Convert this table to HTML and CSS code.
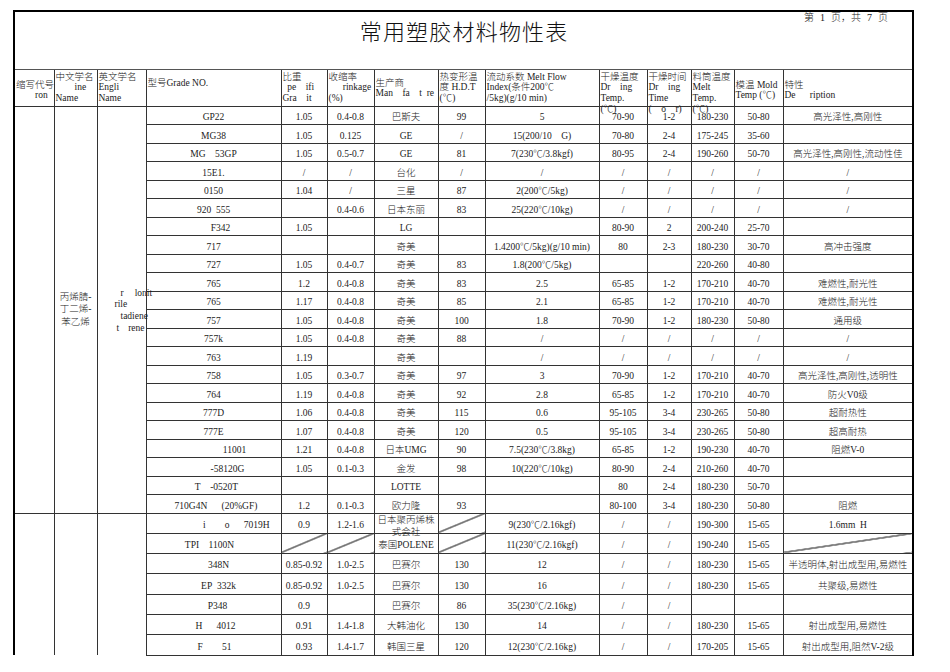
FILE: index.html
```html
<!DOCTYPE html>
<html lang="zh-CN">
<head>
<meta charset="utf-8">
<title>常用塑胶材料物性表</title>
<link rel="stylesheet" href="styles.css">
</head>
<body>
<div class="page">
<table class="sheet">
<colgroup>
<col class="w40"><col class="w43"><col class="w49"><col class="w135"><col class="w46"><col class="w47"><col class="w64"><col class="w47"><col class="w114"><col class="w48"><col class="w44"><col class="w43"><col class="w49"><col class="w130">
</colgroup>
<tr class="r-title">
<td colspan="14" class="title"><span class="pageno">第 1 页，共 7 页</span><h1>常用塑胶材料物性表</h1></td>
</tr>
<tr class="r-head">
<td class="h"><div class="hb mid">缩写代号<br>&ensp;&ensp;&ensp;&ensp;ron</div></td>
<td class="h"><div class="hb">中文学名<br>&ensp;&ensp;&ensp;&ensp;ine<br>Name</div></td>
<td class="h"><div class="hb">英文学名<br>Engli<br>Name</div></td>
<td class="h"><div class="hb one">型号Grade NO.</div></td>
<td class="h"><div class="hb">比重<br>&ensp;pe&ensp;&ensp;ifi<br>Gra&ensp;&ensp;it</div></td>
<td class="h"><div class="hb">收缩率<br>&ensp;&ensp;&ensp;rinkage<br>(%)</div></td>
<td class="h"><div class="hb two">生产商<br>Man&ensp;&ensp;fa&ensp;&ensp;t&ensp;re</div></td>
<td class="h"><div class="hb">热变形温<br>度 H.D.T<br>(℃)</div></td>
<td class="h"><div class="hb">流动系数 Melt Flow<br>Index(条件200℃<br>/5kg)(g/10 min)</div></td>
<td class="h"><div class="hb">干燥温度<br>Dr&ensp;&ensp;ing<br>Temp.<br>(℃)</div></td>
<td class="h"><div class="hb">干燥时间<br>Dr&ensp;&ensp;ing<br>Time<br>(&ensp;&ensp;o&ensp;&ensp;r)</div></td>
<td class="h"><div class="hb">料筒温度<br>Melt<br>Temp.<br>(℃)</div></td>
<td class="h"><div class="hb mid">模温 Mold<br>Temp (℃)</div></td>
<td class="h"><div class="hb mid">特性<br>De&ensp;&ensp;&ensp;ription</div></td>
</tr>

<tr class="ra">
<td rowspan="22" class="span"></td>
<td rowspan="22" class="span"><div class="zh-name">丙烯腈-<br>丁二烯-<br>苯乙烯</div></td>
<td rowspan="22" class="span"><div class="en-name"><div class="i23">r<span class="gap10"></span>lonit</div><div class="i17">rile</div><div class="i23">tadiene</div><div class="i19">t<span class="gap9"></span>rene</div></div></td>
<td>GP22</td><td>1.05</td><td>0.4-0.8</td><td>巴斯夫</td><td>99</td><td>5</td><td>70-90</td><td>1-2</td><td>180-230</td><td>50-80</td><td>高光泽性,高刚性</td>
</tr>
<tr class="ra"><td>MG38</td><td>1.05</td><td>0.125</td><td>GE</td><td>/</td><td>15(200/10&ensp;&ensp;G)</td><td>70-80</td><td>2-4</td><td>175-245</td><td>35-60</td><td></td></tr>
<tr class="ra"><td>MG&ensp;&ensp;53GP</td><td>1.05</td><td>0.5-0.7</td><td>GE</td><td>81</td><td>7(230℃/3.8kgf)</td><td>80-95</td><td>2-4</td><td>190-260</td><td>50-70</td><td>高光泽性,高刚性,流动性佳</td></tr>
<tr class="ra"><td>15E1.</td><td>/</td><td>/</td><td>台化</td><td>/</td><td>/</td><td>/</td><td>/</td><td>/</td><td>/</td><td>/</td></tr>
<tr class="ra"><td>0150</td><td>1.04</td><td>/</td><td>三星</td><td>87</td><td>2(200℃/5kg)</td><td>/</td><td>/</td><td>/</td><td>/</td><td>/</td></tr>
<tr class="ra"><td>920&ensp;555</td><td></td><td>0.4-0.6</td><td>日本东丽</td><td>83</td><td>25(220℃/10kg)</td><td>/</td><td>/</td><td>/</td><td>/</td><td>/</td></tr>
<tr class="ra"><td class="pl15">F342</td><td>1.05</td><td></td><td>LG</td><td></td><td></td><td>80-90</td><td>2</td><td>200-240</td><td>25-70</td><td></td></tr>
<tr class="ra"><td>717</td><td></td><td></td><td>奇美</td><td></td><td>1.4200℃/5kg)(g/10 min)</td><td>80</td><td>2-3</td><td>180-230</td><td>30-70</td><td>高冲击强度</td></tr>
<tr class="ra"><td>727</td><td>1.05</td><td>0.4-0.7</td><td>奇美</td><td>83</td><td>1.8(200℃/5kg)</td><td></td><td></td><td>220-260</td><td>40-80</td><td></td></tr>
<tr class="ra"><td>765</td><td>1.2</td><td>0.4-0.8</td><td>奇美</td><td>83</td><td>2.5</td><td>65-85</td><td>1-2</td><td>170-210</td><td>40-70</td><td>难燃性,耐光性</td></tr>
<tr class="ra"><td>765</td><td>1.17</td><td>0.4-0.8</td><td>奇美</td><td>85</td><td>2.1</td><td>65-85</td><td>1-2</td><td>170-210</td><td>40-70</td><td>难燃性,耐光性</td></tr>
<tr class="ra"><td>757</td><td>1.05</td><td>0.4-0.8</td><td>奇美</td><td>100</td><td>1.8</td><td>70-90</td><td>1-2</td><td>180-230</td><td>50-80</td><td>通用级</td></tr>
<tr class="ra"><td>757k</td><td>1.05</td><td>0.4-0.8</td><td>奇美</td><td>88</td><td>/</td><td>/</td><td>/</td><td>/</td><td>/</td><td>/</td></tr>
<tr class="ra"><td>763</td><td>1.19</td><td></td><td>奇美</td><td></td><td>/</td><td>/</td><td>/</td><td>/</td><td>/</td><td>/</td></tr>
<tr class="ra"><td>758</td><td>1.05</td><td>0.3-0.7</td><td>奇美</td><td>97</td><td>3</td><td>70-90</td><td>1-2</td><td>170-210</td><td>40-70</td><td>高光泽性,高刚性,透明性</td></tr>
<tr class="ra"><td>764</td><td>1.19</td><td>0.4-0.8</td><td>奇美</td><td>92</td><td>2.8</td><td>65-85</td><td>1-2</td><td>170-210</td><td>40-70</td><td>防火V0级</td></tr>
<tr class="ra"><td>777D</td><td>1.06</td><td>0.4-0.8</td><td>奇美</td><td>115</td><td>0.6</td><td>95-105</td><td>3-4</td><td>230-265</td><td>50-80</td><td>超耐热性</td></tr>
<tr class="ra"><td>777E</td><td>1.07</td><td>0.4-0.8</td><td>奇美</td><td>120</td><td>0.5</td><td>95-105</td><td>3-4</td><td>230-265</td><td>50-80</td><td>超高耐热</td></tr>
<tr class="ra"><td class="pl43">11001</td><td>1.21</td><td>0.4-0.8</td><td>日本UMG</td><td>90</td><td>7.5(230℃/3.8kg)</td><td>65-85</td><td>1-2</td><td>190-230</td><td>40-70</td><td>阻燃V-0</td></tr>
<tr class="ra"><td class="pl29">-58120G</td><td>1.05</td><td>0.1-0.3</td><td>金发</td><td>98</td><td>10(220℃/10kg)</td><td>80-90</td><td>2-4</td><td>210-260</td><td>40-70</td><td></td></tr>
<tr class="ra"><td class="pl7">T&ensp;&ensp;-0520T</td><td></td><td></td><td>LOTTE</td><td></td><td></td><td>80</td><td>2-4</td><td>180-230</td><td>50-70</td><td></td></tr>
<tr class="ra"><td class="pl6">710G4N&ensp;&ensp;&ensp;(20%GF)</td><td>1.2</td><td>0.1-0.3</td><td>欧力隆</td><td>93</td><td></td><td>80-100</td><td>3-4</td><td>180-230</td><td>50-80</td><td>阻燃</td></tr>

<tr class="rb">
<td rowspan="7" class="span open"></td>
<td rowspan="7" class="span open"></td>
<td rowspan="7" class="span open"></td>
<td class="tr11">i&ensp;&ensp;&ensp;&ensp;o&ensp;&ensp;&ensp;7019H</td><td>0.9</td><td>1.2-1.6</td><td class="wrap2"><div class="two-line">日本聚丙烯株式会社</div></td><td class="x"></td><td>9(230℃/2.16kgf)</td><td>/</td><td>/</td><td>190-300</td><td>15-65</td><td>1.6mm&ensp;H</td>
</tr>
<tr class="rb"><td class="pr9">TPI&ensp;&ensp;1100N</td><td class="x"></td><td class="x"></td><td>泰国POLENE</td><td class="x"></td><td>11(230℃/2.16kgf)</td><td>/</td><td>/</td><td>190-240</td><td>15-65</td><td class="x"></td></tr>
<tr class="rb"><td class="pl11">348N</td><td>0.85-0.92</td><td>1.0-2.5</td><td>巴赛尔</td><td>130</td><td>12</td><td>/</td><td>/</td><td>180-230</td><td>15-65</td><td>半透明体,射出成型用,易燃性</td></tr>
<tr class="rb"><td class="pl11">EP&ensp;332k</td><td>0.85-0.92</td><td>1.0-2.5</td><td>巴赛尔</td><td>130</td><td>16</td><td>/</td><td>/</td><td>180-230</td><td>15-65</td><td>共聚级,易燃性</td></tr>
<tr class="rb"><td class="pl9">P348</td><td>0.9</td><td></td><td>巴赛尔</td><td>86</td><td>35(230℃/2.16kg)</td><td>/</td><td>/</td><td></td><td></td><td></td></tr>
<tr class="rb"><td class="pl5">H&ensp;&ensp;&ensp;4012</td><td>0.91</td><td>1.4-1.8</td><td>大韩油化</td><td>130</td><td>14</td><td>/</td><td>/</td><td>180-230</td><td>15-65</td><td>射出成型用,易燃性</td></tr>
<tr class="rb"><td class="pl3">F&ensp;&ensp;&ensp;&ensp;51</td><td>0.93</td><td>1.4-1.7</td><td>韩国三星</td><td>120</td><td>12(230℃/2.16kg)</td><td>/</td><td>/</td><td>170-205</td><td>15-65</td><td>射出成型用,阻然V-2级</td></tr>
</table>
</div>
</body>
</html>
```
FILE: styles.css
```css
* { box-sizing: border-box; }
html, body { margin: 0; padding: 0; background: #fff; }
body {
  font-family: "Liberation Serif", "Noto Sans CJK SC", serif;
  color: #1b1b1b;
}
.page { padding: 10px 0 0 13px; }

.sheet {
  border-collapse: collapse;
  table-layout: fixed;
  width: 899px;
  border: 2px solid #000;
  border-bottom-style: none;
  font-size: 9.5px;
  font-weight: 300;
}
.w40 { width: 40px; } .w43 { width: 43px; } .w49 { width: 49px; }
.w135 { width: 135px; } .w46 { width: 46px; } .w47 { width: 47px; }
.w64 { width: 64px; } .w114 { width: 114px; } .w48 { width: 48px; }
.w44 { width: 44px; } .w130 { width: 130px; }

.sheet td {
  border: 1px solid #333;
  padding: 0 1px 1px;
  text-align: center;
  vertical-align: bottom;
  white-space: nowrap;
  line-height: 11px;
  overflow: visible;
}

/* title row */
.r-title { height: 58px; }
.sheet td.title {
  vertical-align: top;
  padding: 4px 0 0;
  position: relative;
  border-bottom-color: #555;
}
.title h1 {
  margin: 0;
  font-family: "Noto Sans CJK SC", sans-serif;
  font-size: 22px;
  font-weight: 300;
  line-height: 28px;
  letter-spacing: 1.2px;
  text-indent: 1.2px;
  text-align: center;
  color: #111;
}
.pageno {
  position: absolute;
  top: 0;
  right: 24px;
  font-size: 10px;
  line-height: 12px;
  word-spacing: 3.5px;
}

/* header row */
.r-head { height: 37px; }
.sheet td.h { vertical-align: top; text-align: left; padding: 0 1px; }
.hb {
  height: 34px;
  padding-top: 2px;
  line-height: 10.7px;
  white-space: pre;
}
.hb.mid { padding-top: 10px; }
.hb.one { padding-top: 8px; }
.hb.two { padding-top: 8px; line-height: 10px; }

/* data rows */
.ra { height: 18.5px; }
.rb { height: 20.3px; }
.sheet .rb td { padding-bottom: 2px; }

.sheet td.span { vertical-align: middle; padding: 0; }
.sheet td.open { border-bottom-style: none; }
.zh-name { line-height: 12.5px; text-align: center; }
.en-name { text-align: left; line-height: 11.7px; padding-top: 3px; }
.i23 { padding-left: 23px; }
.i17 { padding-left: 17px; }
.i19 { padding-left: 19px; }
.gap10 { display: inline-block; width: 11px; }
.gap9 { display: inline-block; width: 9px; }

.sheet td.pl3 { padding-left: 3px; }
.sheet td.pl5 { padding-left: 5px; }
.sheet td.pl6 { padding-left: 6px; }
.sheet td.pl7 { padding-left: 7px; }
.sheet td.pl9 { padding-left: 9px; }
.sheet td.pl11 { padding-left: 11px; }
.sheet td.pl15 { padding-left: 15px; }
.sheet td.pl29 { padding-left: 29px; }
.sheet td.pl43 { padding-left: 43px; }
.sheet td.pr9 { padding-right: 9px; }
.sheet td.tr11 { text-align: right; padding-right: 11px; }

.sheet td.wrap2 { vertical-align: top; white-space: normal; padding: 0 1px; }
.two-line { height: 18px; line-height: 12px; text-align: center; }

.sheet td.x {
  background: linear-gradient(to bottom right,
    transparent calc(50% - 0.8px),
    #222 calc(50% - 0.3px),
    #222 calc(50% + 0.3px),
    transparent calc(50% + 0.8px));
}
```
